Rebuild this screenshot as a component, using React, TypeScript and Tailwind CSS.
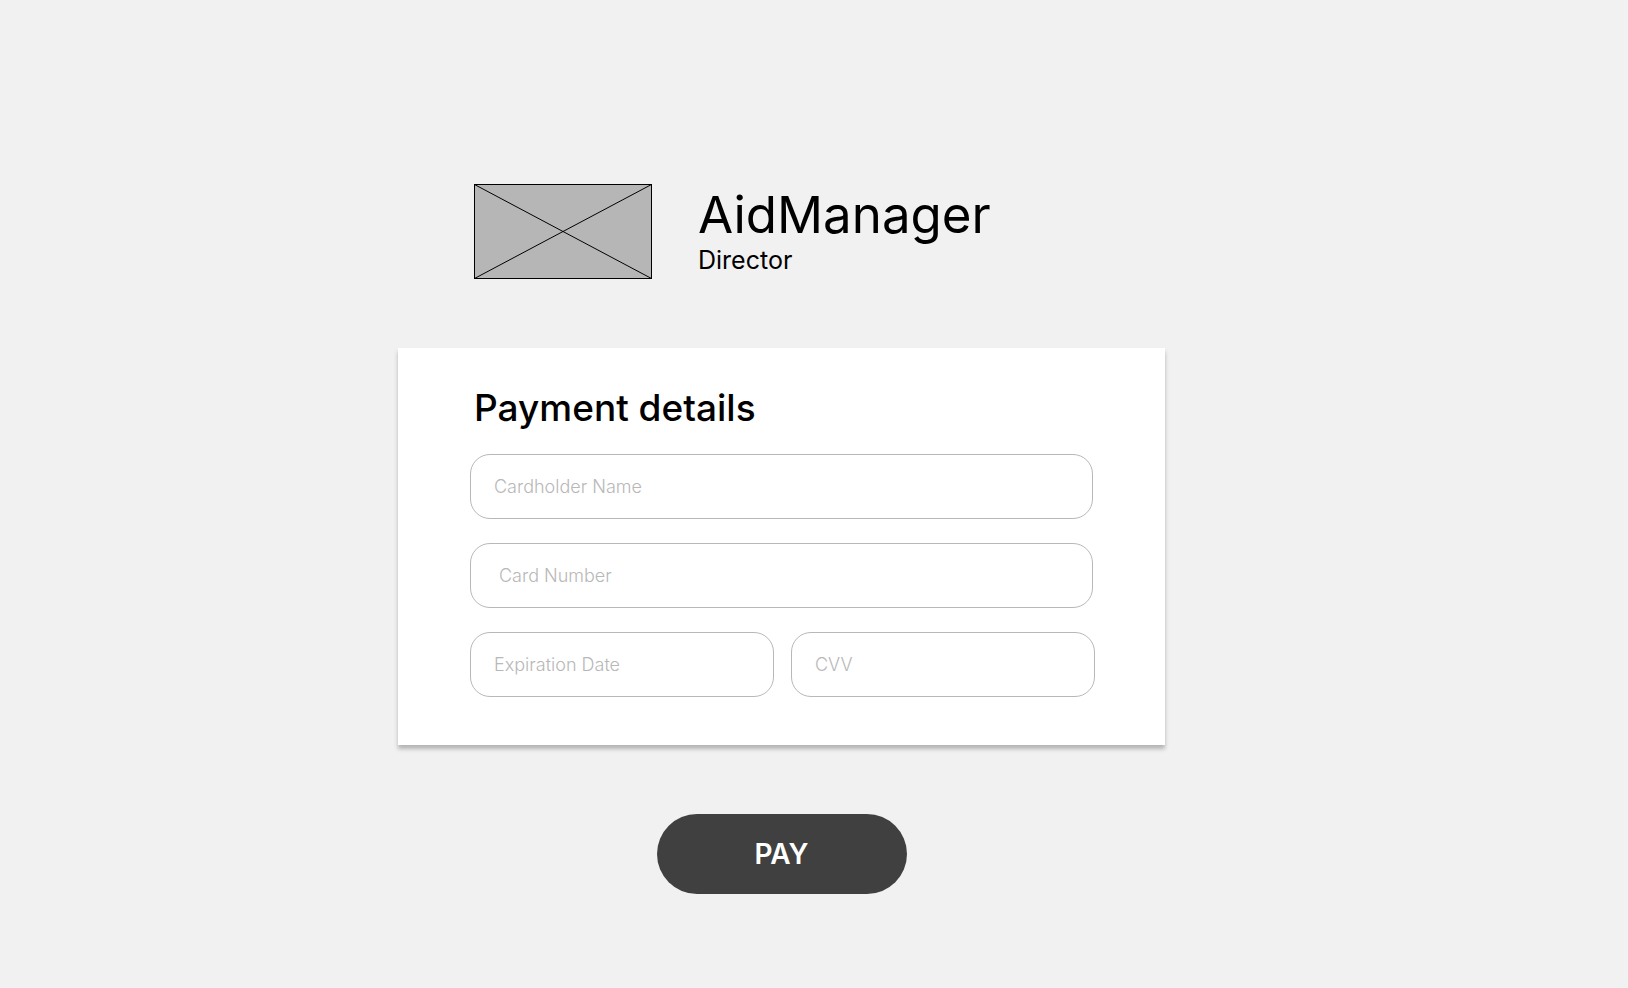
import type { InputHTMLAttributes } from "react";

type FieldProps = InputHTMLAttributes<HTMLInputElement> & { label: string; indent?: string };

function Field({ label, indent = "px-[23px]", ...rest }: FieldProps) {
  return (
    <input
      aria-label={label}
      placeholder={label}
      className={`block h-[65px] w-full min-w-0 rounded-[20px] border border-[#b8b8b8] bg-white ${indent} text-[18px] font-light text-black outline-none placeholder:text-[#b8b8b8] focus:border-[#404040]`}
      {...rest}
    />
  );
}

function ImagePlaceholder() {
  return (
    <svg
      role="img"
      aria-label="Logo"
      viewBox="0 0 178 95"
      className="h-[95px] w-[178px] shrink-0"
      fill="none"
      stroke="#000"
    >
      <rect x="0.5" y="0.5" width="177" height="94" fill="#b6b6b6" />
      <path d="M0.5 0.5 177.5 94.5M177.5 0.5 0.5 94.5" />
    </svg>
  );
}

export default function App() {
  return (
    <div className="min-h-screen bg-[#f1f1f1] pt-46 pr-[65px] pb-12 font-['Inter','Liberation_Sans',sans-serif] text-black">
      <main className="mx-auto flex w-full max-w-[767px] flex-col">
        <header className="flex items-center gap-[46px] pl-19">
          <ImagePlaceholder />
          <div>
            <h1 className="text-[51px] leading-[56px] font-normal">AidManager</h1>
            <p className="text-[25px] leading-[34px]">Director</p>
          </div>
        </header>

        <form className="mt-[69px] flex flex-col" onSubmit={(e) => e.preventDefault()}>
          <section className="bg-white pt-[35px] pr-[70px] pb-12 pl-[72px] shadow-[0_4px_4px_rgba(0,0,0,0.25)]">
            <h2 className="pl-1 text-[37px] leading-[50px] font-medium">Payment details</h2>
            <div className="mt-[21px] flex flex-col gap-6">
              <div className="flex flex-col gap-6 pr-0.5">
                <Field label="Cardholder Name" autoComplete="cc-name" />
                <Field label="Card Number" indent="px-7" autoComplete="cc-number" inputMode="numeric" />
              </div>
              <div className="flex gap-[17px]">
                <Field label="Expiration Date" autoComplete="cc-exp" />
                <Field label="CVV" autoComplete="cc-csc" inputMode="numeric" />
              </div>
            </div>
          </section>

          <button
            type="submit"
            className="mt-[69px] h-20 w-[250px] cursor-pointer self-center rounded-full bg-[#404040] text-[28px] font-semibold text-white"
          >
            PAY
          </button>
        </form>
      </main>
    </div>
  );
}
